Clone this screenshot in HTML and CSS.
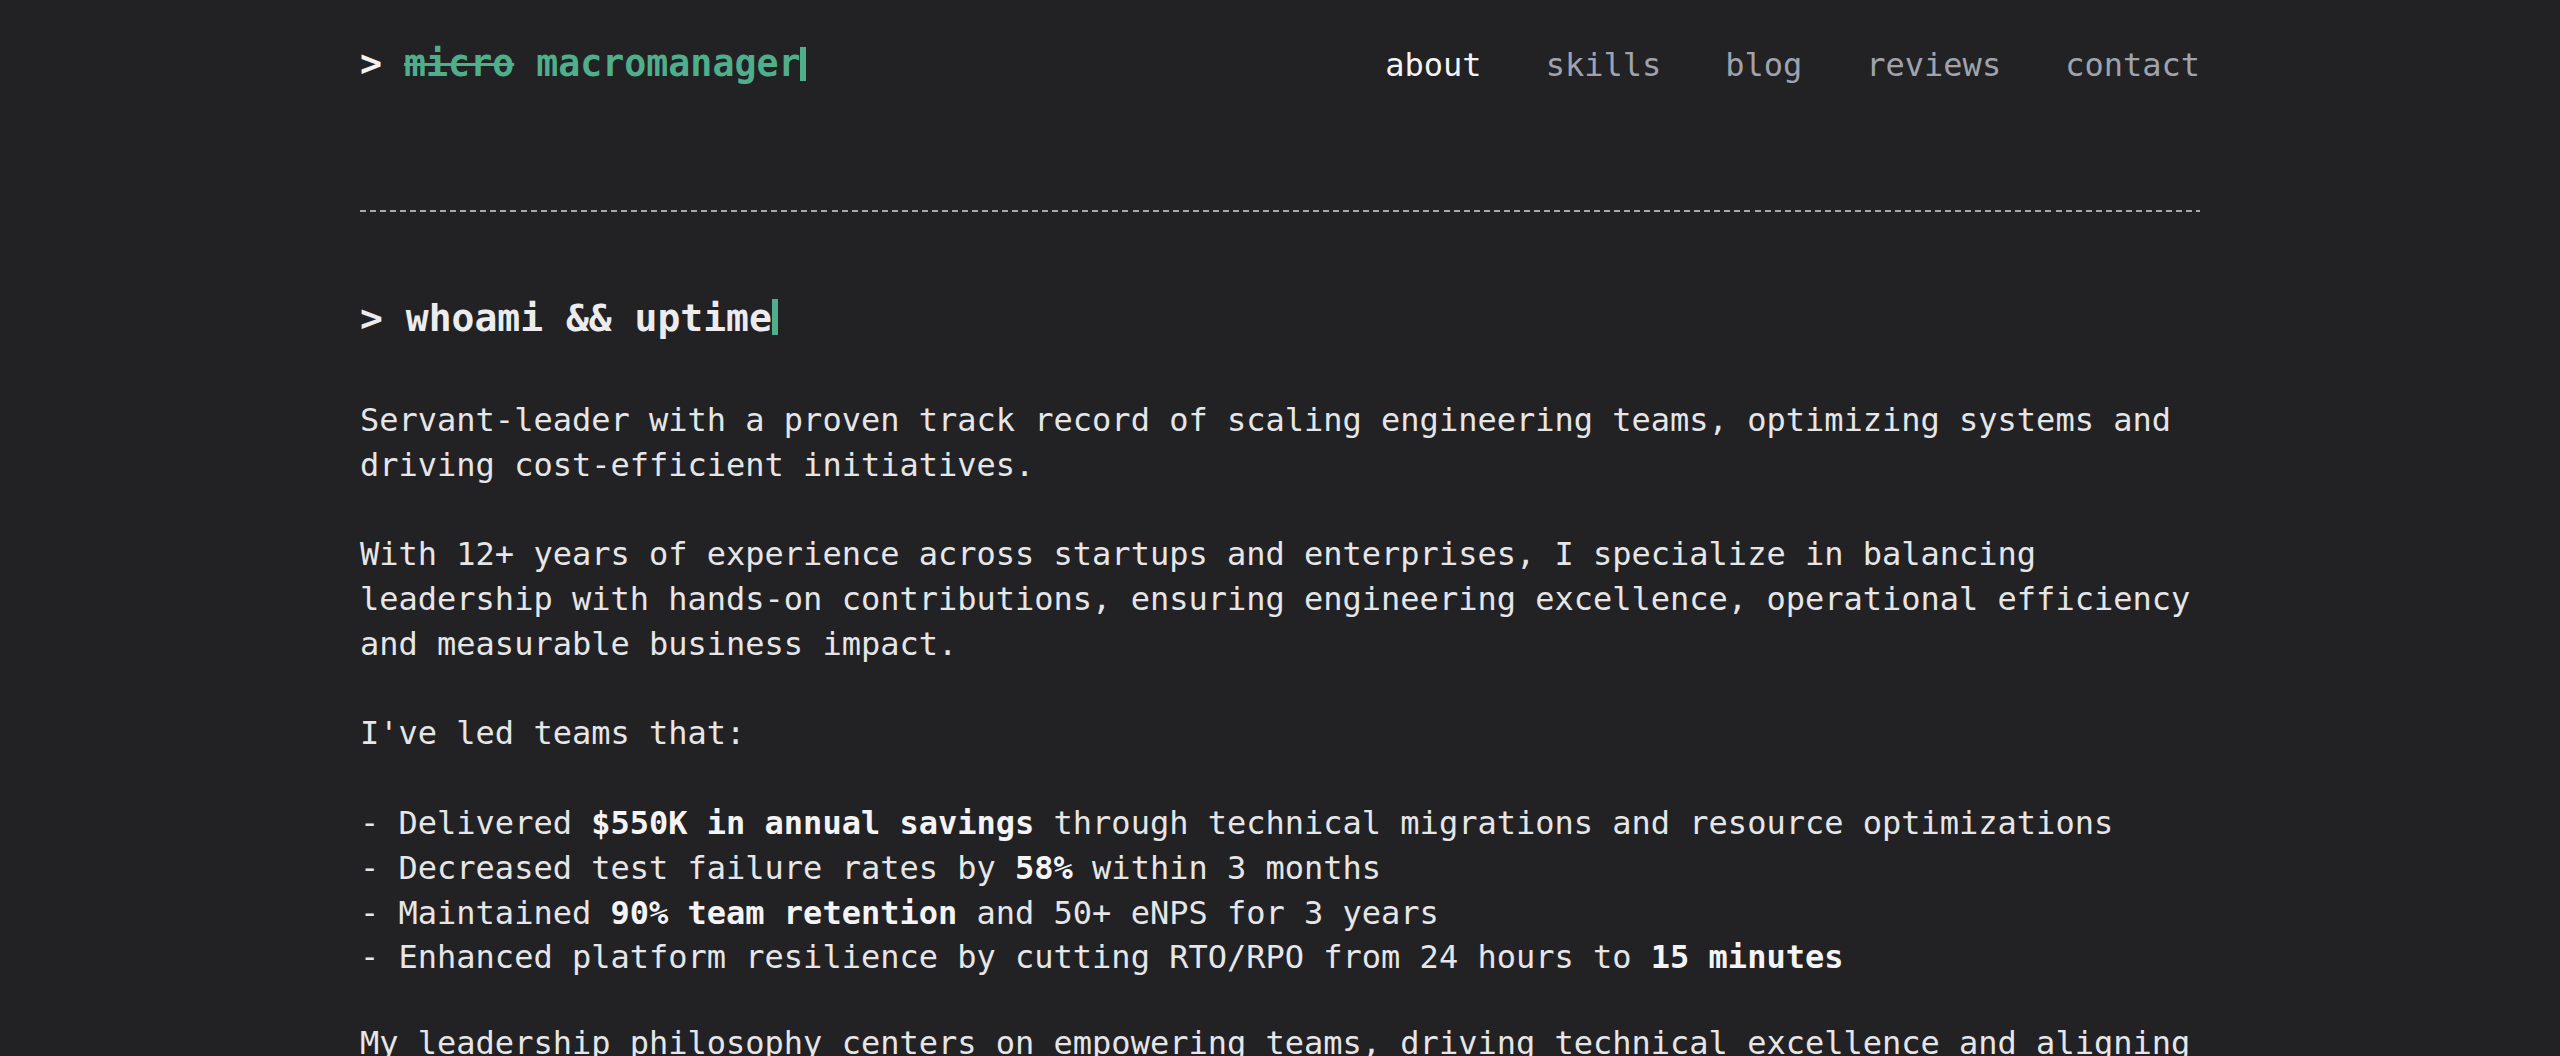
FILE: index.html
```html
<!DOCTYPE html>
<html lang="en">
<head>
<meta charset="utf-8">
<title>macromanager</title>
<link rel="stylesheet" href="styles.css">
</head>
<body>
<div class="page">
  <header class="header">
    <a class="logo" href="#"><span class="prompt">&gt;</span> <s class="strike">micro</s> macromanager<span class="cursor"></span></a>
    <nav class="nav">
      <a class="nav-link active" href="#about">about</a>
      <a class="nav-link" href="#skills">skills</a>
      <a class="nav-link" href="#blog">blog</a>
      <a class="nav-link" href="#reviews">reviews</a>
      <a class="nav-link" href="#contact">contact</a>
    </nav>
  </header>
  <div class="rule"></div>
  <main class="content" id="about">
    <h1 class="title">&gt; whoami &amp;&amp; uptime<span class="cursor cursor-title"></span></h1>
    <p>Servant-leader with a proven track record of scaling engineering teams, optimizing systems and driving cost-efficient initiatives.</p>
    <p>With 12+ years of experience across startups and enterprises, I specialize in balancing leadership with hands-on contributions, ensuring engineering excellence, operational efficiency and measurable business impact.</p>
    <p>I've led teams that:</p>
    <p class="list">- Delivered <b>$550K in annual savings</b> through technical migrations and resource optimizations<br>- Decreased test failure rates by <b>58%</b> within 3 months<br>- Maintained <b>90% team retention</b> and 50+ eNPS for 3 years<br>- Enhanced platform resilience by cutting RTO/RPO from 24 hours to <b>15 minutes</b></p>
    <p>My leadership philosophy centers on empowering teams, driving technical excellence and aligning engineering efforts with business goals.</p>
  </main>
</div>
</body>
</html>
```
FILE: styles.css
```css
html, body {
  margin: 0;
  padding: 0;
}
body {
  background: #222224;
  color: #e6e6e8;
  font-family: "DejaVu Sans Mono", "Liberation Mono", monospace;
  font-size: 32px;
  line-height: 1.4;
}
a {
  text-decoration: none;
  color: inherit;
}
.page {
  width: 1840px;
  margin: 0 auto;
}
.header {
  display: flex;
  justify-content: space-between;
  align-items: baseline;
  padding-top: 38px;
}
.logo {
  font-size: 36.6px;
  font-weight: bold;
  color: #4fae8c;
  white-space: nowrap;
}
.prompt {
  color: #f2f2f2;
}
.strike {
  text-decoration: line-through;
  text-decoration-thickness: 3px;
}
.cursor {
  display: inline-block;
  width: 6px;
  height: 34px;
  background: #4fae8c;
  vertical-align: -5px;
}
.nav {
  display: flex;
  gap: 64px;
}
.nav-link {
  color: #9fa3ae;
}
.nav-link.active {
  color: #f4f4f4;
}
.rule {
  margin-top: 120.5px;
  height: 2px;
  background: repeating-linear-gradient(to right, #a9a9ad 0 6px, transparent 6px 10.0326px);
}
.title {
  margin: 80px 0 53px;
  font-size: 38px;
  line-height: 1.4;
  font-weight: bold;
  color: #ececee;
}
.cursor-title {
  height: 36px;
  vertical-align: -4px;
}
.content p {
  margin: 0 0 44.8px;
}
.content p.list {
  margin-bottom: 41px;
}
.content b {
  color: #f4f4f6;
}
```
